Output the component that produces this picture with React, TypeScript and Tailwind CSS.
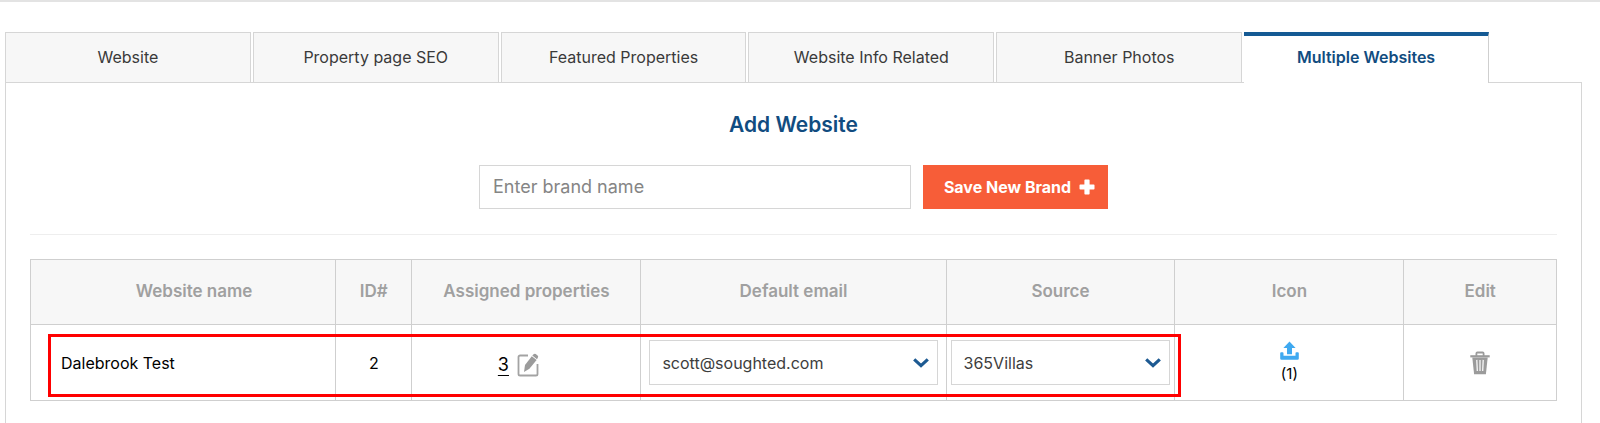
import { useState } from "react";

const tabs = [
  "Website",
  "Property page SEO",
  "Featured Properties",
  "Website Info Related",
  "Banner Photos",
  "Multiple Websites",
];

const columns = [
  { label: "Website name", width: "w-[20%] pl-[22px]" },
  { label: "ID#", width: "w-[5%]" },
  { label: "Assigned properties", width: "w-[15%]" },
  { label: "Default email", width: "w-[20%]" },
  { label: "Source", width: "w-[15%]" },
  { label: "Icon", width: "w-[15%]" },
  { label: "Edit", width: "w-[10%]" },
];

function PlusIcon() {
  return (
    <svg viewBox="0 0 16 16" className="size-4" fill="currentColor" aria-hidden="true">
      <path d="M6.200 0.500h3.600a.8.8 0 0 1 .8.8v4.100h4.100a.8.8 0 0 1 .8.8v3.600a.8.8 0 0 1-.8.8h-4.100v4.100a.8.8 0 0 1-.8.8H6.200a.8.8 0 0 1-.8-.8v-4.100H1.300a.8.8 0 0 1-.8-.8V6.200a.8.8 0 0 1 .8-.8h4.100V1.300a.8.8 0 0 1 .8-.8z" />
    </svg>
  );
}

function ChevronIcon() {
  return (
    <svg viewBox="0 0 16 10" className="h-[10px] w-4" fill="none" aria-hidden="true">
      <path d="M1.200 1.400 8 7.600l6.800-6.200" stroke="#1d5a92" strokeWidth="3.200" />
    </svg>
  );
}

function EditIcon() {
  return (
    <svg viewBox="0 0 22 24" className="h-6 w-[22px]" fill="none" aria-hidden="true">
      <path
        d="M11 2.500H3.100A1.600 1.600 0 0 0 1.500 4.100v16.800a1.600 1.600 0 0 0 1.600 1.600h15.800a1.600 1.600 0 0 0 1.600-1.600V11"
        stroke="#a3a3a3"
        strokeWidth="1.800"
      />
      <path d="M14.800 3.200 19.600 6.900 12.400 15.800 7 19 8 12z" fill="#9b9b9b" />
      <path d="M15.300 2.600 16.600 1.300a1.500 1.500 0 0 1 2.100-.2l1.900 1.500a1.500 1.500 0 0 1 .2 2.100l-.8 1.600z" fill="#9b9b9b" />
    </svg>
  );
}

function UploadIcon() {
  return (
    <svg viewBox="0 0 19 19" className="size-[19px]" fill="#3fa9f0" aria-hidden="true">
      <path d="M9.500 0.500 15.600 7H12v6.200H7V7H3.400z" />
      <path d="M1.100 11.300h1.500a.9.900 0 0 1 .9.900v2.600h12v-2.600a.9.900 0 0 1 .9-.9h1.500a.9.900 0 0 1 .9.900v5.200a1.300 1.300 0 0 1-1.300 1.300h-16a1.300 1.300 0 0 1-1.300-1.300v-5.200a.9.900 0 0 1 .9-.9z" />
    </svg>
  );
}

function TrashIcon() {
  return (
    <svg viewBox="0 0 20 24" className="h-6 w-5" fill="none" aria-hidden="true">
      <path d="M6.400 5V2.500a1 1 0 0 1 1-1h5.200a1 1 0 0 1 1 1V5" stroke="#9b9b9b" strokeWidth="1.800" />
      <path d="M0.300 4.200h19.400v2.200H0.300z" fill="#9b9b9b" />
      <path d="M2.300 6.400h15.400L15.900 23.300H4.100z" fill="#9b9b9b" />
      <path d="M6.800 8.900 7.300 20M10 8.900v11.100M13.200 8.900 12.700 20" stroke="#fff" strokeWidth="1.200" />
    </svg>
  );
}

function SelectBox({ label, options }: { label: string; options: string[] }) {
  return (
    <div className="relative">
      <select
        aria-label={label}
        className="block h-[45px] w-full appearance-none border border-[#d6d6d6] bg-white pr-10 pl-3 text-base text-[#3d3d3d]"
      >
        {options.map((option) => (
          <option key={option}>{option}</option>
        ))}
      </select>
      <span className="pointer-events-none absolute inset-y-0 right-[9px] flex items-center">
        <ChevronIcon />
      </span>
    </div>
  );
}

export default function App() {
  const [active, setActive] = useState("Multiple Websites");

  return (
    <div className="flex min-h-screen flex-col border-t-2 border-[#e3e3e3] bg-white pt-[30px] pr-[18px] pl-[5px] font-['Inter','Liberation_Sans',sans-serif] text-base text-black">
      <div role="tablist" className="relative z-10 -mb-px flex w-[94.1%] gap-[2px]">
        {tabs.map((tab) => (
          <button
            key={tab}
            type="button"
            role="tab"
            aria-selected={tab === active}
            onClick={() => setActive(tab)}
            className={
              tab === active
                ? "h-[51px] min-w-0 flex-1 border-t-4 border-r border-t-[#155a94] border-r-[#cfcfcf] bg-white pb-[5px] font-semibold text-[#114c80]"
                : "h-[51px] min-w-0 flex-1 border border-[#d6d6d6] bg-[#f7f7f7] pb-[2px] text-[#3a3a3a]"
            }
          >
            {tab}
          </button>
        ))}
      </div>

      <main className="flex-1 border-x border-t border-[#d6d6d6] px-6 pt-[27px] pb-8">
        <h1 className="text-center text-[21px] leading-[30px] font-semibold text-[#114c80]">Add Website</h1>

        <form className="mt-[25px] flex justify-center gap-3" onSubmit={(e) => e.preventDefault()}>
          <input
            type="text"
            aria-label="Brand name"
            placeholder="Enter brand name"
            className="h-11 w-[432px] border border-[#d6d6d6] px-[13px] pb-[2px] text-lg text-[#3d3d3d] placeholder:text-[#858585]"
          />
          <button
            type="submit"
            className="flex h-11 w-[185px] items-center justify-center gap-2 bg-[#f75d38] pl-2 font-bold whitespace-nowrap text-white"
          >
            Save New Brand
            <PlusIcon />
          </button>
        </form>

        <hr className="mt-[25px] border-[#eeeeee]" />

        <div className="relative mt-6">
          <table className="w-full table-fixed border-collapse">
            <thead>
              <tr className="h-[65px] bg-[#f7f7f7]">
                {columns.map((column) => (
                  <th
                    key={column.label}
                    scope="col"
                    className={`${column.width} border border-[#cfcfcf] text-[17px] font-semibold text-[#a0a0a0]`}
                  >
                    {column.label}
                  </th>
                ))}
              </tr>
            </thead>
            <tbody>
              <tr className="h-[76px]">
                <td className="border border-[#cfcfcf] pl-[30px]">Dalebrook Test</td>
                <td className="border border-[#cfcfcf] text-center">2</td>
                <td className="border border-[#cfcfcf]">
                  <div className="flex items-center justify-center gap-2 pt-1 pr-4">
                    <a href="#properties" className="text-lg underline underline-offset-4">
                      3
                    </a>
                    <button type="button" aria-label="Edit assigned properties">
                      <EditIcon />
                    </button>
                  </div>
                </td>
                <td className="border border-[#cfcfcf] px-2">
                  <SelectBox label="Default email" options={["scott@soughted.com"]} />
                </td>
                <td className="border border-[#cfcfcf] px-1">
                  <SelectBox label="Source" options={["365Villas"]} />
                </td>
                <td className="border border-[#cfcfcf]">
                  <button type="button" aria-label="Upload icon" className="mx-auto flex flex-col items-center gap-1">
                    <UploadIcon />
                    <span className="text-[15px] leading-5">(1)</span>
                  </button>
                </td>
                <td className="border border-[#cfcfcf]">
                  <button type="button" aria-label="Delete website" className="mx-auto block">
                    <TrashIcon />
                  </button>
                </td>
              </tr>
            </tbody>
          </table>
          <div className="pointer-events-none absolute bottom-1 left-[18px] h-[63px] w-[74.2%] border-3 border-[#ff0000]" />
        </div>
      </main>
    </div>
  );
}
